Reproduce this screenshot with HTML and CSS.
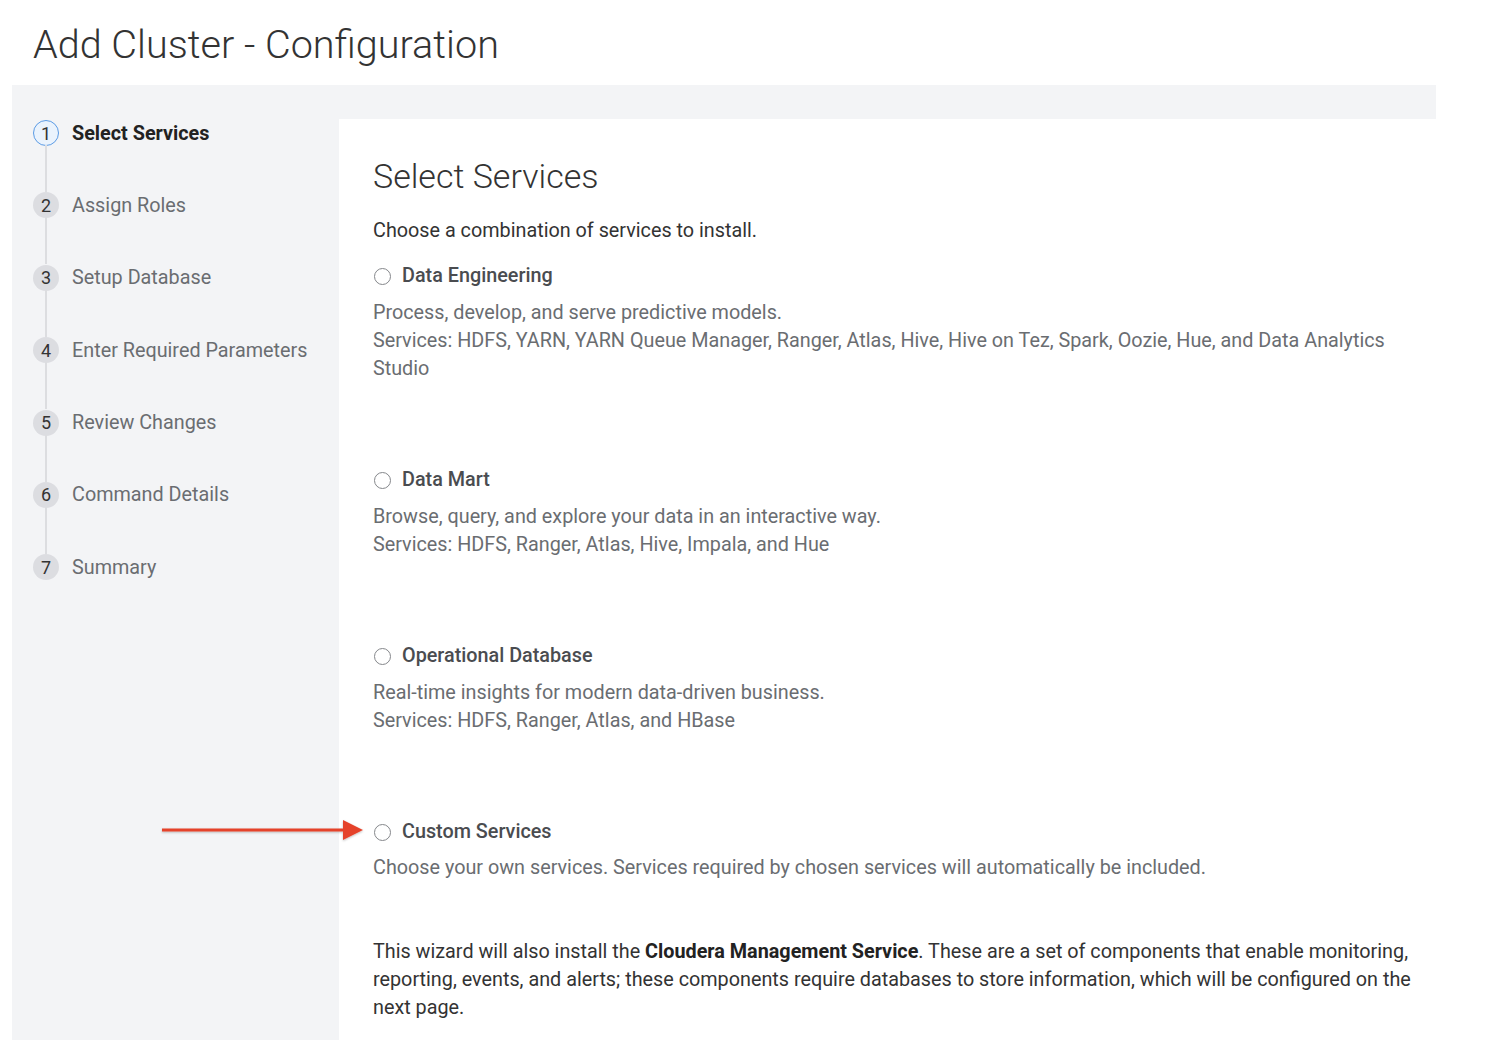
FILE: index.html
```html
<!DOCTYPE html>
<html>
<head>
<meta charset="utf-8">
<link rel="stylesheet" href="styles.css">
</head>
<body>
<h1 class="page-title">Add Cluster - Configuration</h1>
<div class="wizard">
  <ol class="steps">
    <li class="step active"><span class="num">1</span><span class="label">Select Services</span></li>
    <li class="step"><span class="num">2</span><span class="label">Assign Roles</span></li>
    <li class="step"><span class="num">3</span><span class="label">Setup Database</span></li>
    <li class="step"><span class="num">4</span><span class="label">Enter Required Parameters</span></li>
    <li class="step"><span class="num">5</span><span class="label">Review Changes</span></li>
    <li class="step"><span class="num">6</span><span class="label">Command Details</span></li>
    <li class="step last"><span class="num">7</span><span class="label">Summary</span></li>
  </ol>
  <div class="content">
    <h2 class="heading">Select Services</h2>
    <p class="intro">Choose a combination of services to install.</p>

    <div class="option">
      <label class="opt-label"><span class="radio"></span>Data Engineering</label>
      <p class="desc">Process, develop, and serve predictive models.<br>Services: HDFS, YARN, YARN Queue Manager, Ranger, Atlas, Hive, Hive on Tez, Spark, Oozie, Hue, and Data Analytics Studio</p>
    </div>

    <div class="option">
      <label class="opt-label"><span class="radio"></span>Data Mart</label>
      <p class="desc">Browse, query, and explore your data in an interactive way.<br>Services: HDFS, Ranger, Atlas, Hive, Impala, and Hue</p>
    </div>

    <div class="option">
      <label class="opt-label"><span class="radio"></span>Operational Database</label>
      <p class="desc">Real-time insights for modern data-driven business.<br>Services: HDFS, Ranger, Atlas, and HBase</p>
    </div>

    <div class="option custom">
      <label class="opt-label"><span class="radio"></span>Custom Services</label>
      <p class="desc">Choose your own services. Services required by chosen services will automatically be included.</p>
    </div>

    <p class="note">This wizard will also install the <b>Cloudera Management Service</b>. These are a set of components that enable monitoring, reporting, events, and alerts; these components require databases to store information, which will be configured on the next page.</p>
  </div>
</div>
<svg class="arrow" width="210" height="30" viewBox="0 0 210 30">
  <defs>
    <filter id="sh" x="-10%" y="-50%" width="120%" height="200%">
      <feDropShadow dx="0" dy="1" stdDeviation="1" flood-color="#000" flood-opacity="0.25"/>
    </filter>
  </defs>
  <g filter="url(#sh)">
    <rect x="2" y="13.5" width="184" height="3" fill="#e5432c"/>
    <polygon points="183,5 203,15 183,25" fill="#e5432c"/>
  </g>
</svg>
</body>
</html>
```
FILE: styles.css
```css
html, body {
  margin: 0;
  padding: 0;
  background: #ffffff;
}
body {
  font-family: Roboto, "Liberation Sans", Arial, sans-serif;
  color: #333;
  position: relative;
  height: 1040px;
  overflow: hidden;
}
.page-title {
  margin: 0;
  height: 85px;
  box-sizing: border-box;
  padding: 20px 0 0 33px;
  font-size: 39.6px;
  line-height: 50px;
  font-weight: 300;
  color: #333;
}
.wizard {
  margin-left: 12px;
  width: 1424px;
  background: #f3f4f6;
  display: flex;
  min-height: 955px;
}
.steps {
  list-style: none;
  margin: 0;
  padding: 34px 0 0 21px;
  width: 306px;
  flex: none;
}
.step {
  position: relative;
  display: flex;
  align-items: center;
  height: 28px;
  margin-bottom: 44.4px;
  font-size: 19.8px;
}
.step:not(.last)::before {
  content: "";
  position: absolute;
  left: 12px;
  top: 26px;
  width: 2px;
  height: 47px;
  background: #dcdde0;
}
.num {
  width: 26px;
  height: 26px;
  border-radius: 50%;
  background: #dcdde1;
  color: #333;
  font-size: 18px;
  display: flex;
  align-items: center;
  justify-content: center;
  box-sizing: border-box;
  flex: none;
}
.label {
  margin-left: 13px;
  color: #6a6d71;
}
.step.active .num {
  background: #eaf3fd;
  border: 1.5px solid #5b9be5;
  color: #333;
}
.step.active .label {
  color: #222;
  font-weight: 700;
}
.content {
  flex: 1;
  background: #ffffff;
  margin-top: 34px;
  padding: 37px 16px 0 34px;
}
.heading {
  margin: 0;
  font-size: 34px;
  line-height: 40px;
  font-weight: 300;
  color: #333;
}
.intro {
  margin: 21px 0 0;
  font-size: 19.8px;
  line-height: 28px;
  color: #333;
}
.option {
  margin-top: 17px;
}
.option + .option {
  margin-top: 83px;
}
.opt-label {
  display: flex;
  align-items: center;
  font-size: 19.8px;
  line-height: 28px;
  font-weight: 500;
  color: #4a4c50;
}
.radio {
  width: 17px;
  height: 17px;
  border: 1.5px solid #85878b;
  border-radius: 50%;
  box-sizing: border-box;
  margin: 0 11px 0 1px;
  background: #fff;
}
.desc {
  margin: 9px 0 0;
  font-size: 19.8px;
  line-height: 28px;
  color: #6a6d71;
}
.custom .desc {
  margin-top: 8px;
}
.note {
  margin: 56px 0 0;
  font-size: 19.8px;
  line-height: 28px;
  color: #333;
}
.note b {
  font-weight: 700;
  color: #222;
}
.arrow {
  position: absolute;
  left: 160px;
  top: 815px;
}
```
